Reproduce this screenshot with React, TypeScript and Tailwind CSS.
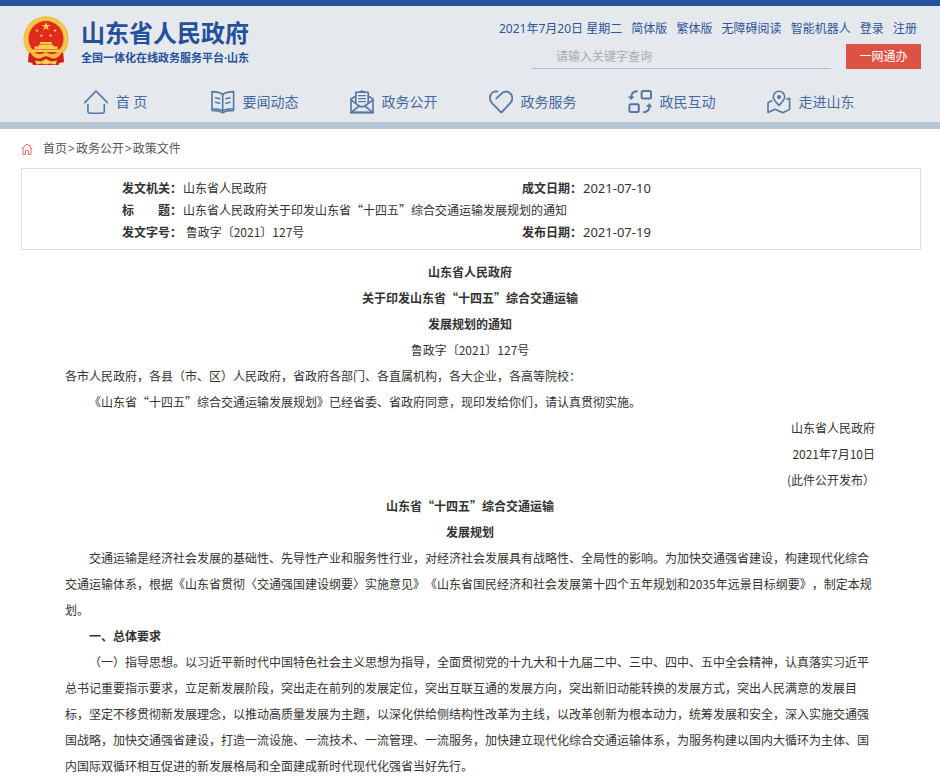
import React from 'react';

interface NavItem {
  label: string;
  icon: React.ReactNode;
}

interface Paragraph {
  text: string;
  kind: 'title' | 'center' | 'plain' | 'indent' | 'heading' | 'right';
}

const Icon: React.FC<{ children: React.ReactNode; width?: number }> = ({ children, width = 1.6 }) => (
  <svg
    viewBox="0 0 24 24"
    className="w-6 h-6 shrink-0 text-[#5577a3]"
    fill="none"
    stroke="currentColor"
    strokeWidth={width}
    strokeLinecap="round"
    strokeLinejoin="round"
    aria-hidden="true"
  >
    {children}
  </svg>
);

const navItems: NavItem[] = [
  {
    label: '首 页',
    icon: (
      <Icon>
        <path d="M.8 12.6 12 1l11.4 11.6" />
        <path d="M3.9 14.6v6.2q0 2.4 2.2 2.4h12q2.2 0 2.2-2.4v-6.2" />
      </Icon>
    ),
  },
  {
    label: '要闻动态',
    icon: (
      <Icon>
        <path d="M11.7 4.4C9 2.2 5 1.6 1 1.6v17.2c4 0 8 .4 10.7 2 2.7-1.6 6.7-2 10.9-2V1.6c-4.1 0-8.1.6-10.9 2.8z" />
        <path d="M11.7 4.4v16.4M1 18.8v1.6c4 0 8 .6 10.7 2.4 2.7-1.8 6.7-2.4 10.9-2.4v-1.6" />
        <path d="M4.6 7.8l4 1M4.6 12.2l4 1M15 8.8l4-1M15 13.2l4-1" />
      </Icon>
    ),
  },
  {
    label: '政务公开',
    icon: (
      <Icon>
        <path d="M5.8 13V2.2h12.4V13" />
        <path d="M9.5 2.2 12 1l2.500 1.2" />
        <path d="M5.8 6 1 9v13.500h22V9l-4.800-3" />
        <path d="M1 9.800l8.200 6.200q2.800 1.600 5.600 0L23 9.800" />
        <path d="M1.400 22.200l7.800-6.200M22.600 22.200 14.800 16" />
        <path d="M8.500 5.600h7M8.500 8.600h7M8.500 11.600h7" strokeWidth="1.2" />
        <path d="M1 22.500h22" strokeWidth="2.2" />
      </Icon>
    ),
  },
  {
    label: '政务服务',
    icon: (
      <Icon width={1.8}>
        <path d="M7.400 8.400l4.800-4.600c2.200-2.200 6-3.200 8.600-.8 3.200 2.800 3.400 7 .6 9.900L12.300 22.600 3 13.100C.2 10.200.2 5.200 3.300 2.600c1.500-1.200 3.300-1.500 5-1.200" />
      </Icon>
    ),
  },
  {
    label: '政民互动',
    icon: (
      <Icon width={2}>
        <rect x="13.6" y="1" width="9.400" height="7.400" rx="1.500" />
        <rect x="1.400" y="14.200" width="9.400" height="7.800" rx="1.500" />
        <path d="M9 1.200C5.400 1.400 3.400 3.600 3.300 7" />
        <path d="M1 6.800h4.800L3.300 9.400z" fill="currentColor" strokeWidth=".8" />
        <path d="M16 22.200c3.600-.4 5.400-2.400 5.500-5.800" />
        <path d="M19 16.400h4.600L21.400 13.800z" fill="currentColor" strokeWidth=".8" />
      </Icon>
    ),
  },
  {
    label: '走进山东',
    icon: (
      <Icon>
        <path d="M12 15.400C9 12 6.300 9.700 6.300 6.900a5.700 5.700 0 0 1 11.400 0c0 2.800-2.700 5.100-5.700 8.500z" />
        <circle cx="12" cy="7" r="1.200" fill="currentColor" />
        <path d="M4.800 10.800 1 12.800v9.600l7-3.200 7.800 3.600 6.800-3.400V8.200l-2.600 1" />
      </Icon>
    ),
  },
];

const topLinks = ['简体版', '繁体版', '无障碍阅读', '智能机器人', '登录', '注册'];

const paragraphs: Paragraph[] = [
  { kind: 'title', text: '山东省人民政府' },
  { kind: 'title', text: '关于印发山东省“十四五”综合交通运输' },
  { kind: 'title', text: '发展规划的通知' },
  { kind: 'center', text: '鲁政字〔2021〕127号' },
  { kind: 'plain', text: '各市人民政府，各县（市、区）人民政府，省政府各部门、各直属机构，各大企业，各高等院校：' },
  { kind: 'indent', text: '《山东省“十四五”综合交通运输发展规划》已经省委、省政府同意，现印发给你们，请认真贯彻实施。' },
  { kind: 'right', text: '山东省人民政府' },
  { kind: 'right', text: '2021年7月10日' },
  { kind: 'right', text: '(此件公开发布）' },
  { kind: 'title', text: '山东省“十四五”综合交通运输' },
  { kind: 'title', text: '发展规划' },
  {
    kind: 'indent',
    text: '交通运输是经济社会发展的基础性、先导性产业和服务性行业，对经济社会发展具有战略性、全局性的影响。为加快交通强省建设，构建现代化综合交通运输体系，根据《山东省贯彻〈交通强国建设纲要〉实施意见》《山东省国民经济和社会发展第十四个五年规划和2035年远景目标纲要》，制定本规划。',
  },
  { kind: 'heading', text: '一、总体要求' },
  {
    kind: 'indent',
    text: '（一）指导思想。以习近平新时代中国特色社会主义思想为指导，全面贯彻党的十九大和十九届二中、三中、四中、五中全会精神，认真落实习近平总书记重要指示要求，立足新发展阶段，突出走在前列的发展定位，突出互联互通的发展方向，突出新旧动能转换的发展方式，突出人民满意的发展目标，坚定不移贯彻新发展理念，以推动高质量发展为主题，以深化供给侧结构性改革为主线，以改革创新为根本动力，统筹发展和安全，深入实施交通强国战略，加快交通强省建设，打造一流设施、一流技术、一流管理、一流服务，加快建立现代化综合交通运输体系，为服务构建以国内大循环为主体、国内国际双循环相互促进的新发展格局和全面建成新时代现代化强省当好先行。',
  },
];

const paragraphStyles: Record<Paragraph['kind'], string> = {
  title: 'text-center font-bold',
  center: 'text-center',
  plain: '',
  indent: 'indent-6',
  heading: 'indent-6 font-bold',
  right: 'text-right',
};

const star = 'M0-1 .24-.31.95-.31.38.12.59.81 0 .4-.59.81-.38.12-.95-.31-.24-.31z';

const Emblem: React.FC = () => (
  <svg viewBox="0 0 46 50" className="w-[46px] h-[50px] shrink-0" role="img" aria-label="国徽">
    <path d="M6 34h34l.5 12-4 .5-1 2.500H10l-1-2.500-3.500-.5z" fill="#cf1f1c" />
    <circle cx="23" cy="22.800" r="22.600" fill="#f3bd3c" />
    <circle cx="23" cy="22.800" r="20" fill="none" stroke="#f8d468" strokeWidth="1.500" strokeDasharray="2 1" />
    <circle cx="23" cy="22.600" r="17.500" fill="#e02a20" />
    <g fill="#f7cf4b">
      <path d={star} transform="translate(23 10.500) scale(4.500)" />
      <path d={star} transform="translate(14 14.500) scale(2)" />
      <path d={star} transform="translate(32 14.500) scale(2)" />
      <path d={star} transform="translate(18.500 19.500) scale(2)" />
      <path d={star} transform="translate(27.500 19.500) scale(2)" />
      <path d="M17.500 26h11l1 2.500h-13zM15.500 29h15v1.500h4V33h-23v-2.500h4z" />
      <path d="M9 33.500h28v2.500H9z" />
    </g>
    <path d="M6 37c5-1 8 1 11 3l6-2 6 2c3-2 6-4 11-3l1 9-5 1-1 2H11l-1-2-5-1z" fill="#d4201c" />
    <path d="M9 35.500c4 3 8 4 14 .5 6 3.500 10 2.500 14-.5l1 2.500c-4 5-8 5.500-11 3.500l-4-1.500-4 1.500c-3 2-7 1.500-11-3.500z" fill="#f3bd3c" />
    <path d="M12 44.500l6 1 5-2.500 5 2.500 6-1-1.500 4-5.500-1-4 1-4-1-5.500 1z" fill="#f7cf4b" />
  </svg>
);

const Header: React.FC = () => (
  <header className="bg-[#e5e8ed] border-t-[6px] border-t-[#24539b] border-b-[7px] border-b-[#b6c4d2] text-[#2b5596]">
    <div className="flex justify-between pl-[23px] pr-[19px] pt-[10px]">
      <a href="#" className="flex gap-3 h-[54px]">
        <Emblem />
        <div className="pt-px font-bold text-[#24509a]">
          <h1 className="text-2xl leading-8">山东省人民政府</h1>
          <p className="text-[11px] leading-[18px] whitespace-nowrap">全国一体化在线政务服务平台·山东</p>
        </div>
      </a>
      <div className="w-[422px]">
        <div className="flex justify-between pr-1 pt-[5px] leading-4 whitespace-nowrap">
          <span>2021年7月20日 星期二</span>
          {topLinks.map((label) => (
            <a key={label} href="#">{label}</a>
          ))}
        </div>
        <form className="flex items-end justify-end gap-[15px] mt-[7px]" onSubmit={(e) => e.preventDefault()}>
          <input
            type="text"
            aria-label="搜索"
            placeholder="请输入关键字查询"
            className="w-[300px] h-[25px] px-[25px] border-b border-[#aebdd2] bg-transparent outline-none placeholder:text-[#a9acb0]"
          />
          <button type="button" className="w-[75px] h-[25px] bg-[#dc5345] text-white">一网通办</button>
        </form>
      </div>
    </div>
    <nav className="grid grid-cols-6 pl-[46px] pr-[60px] pt-[20px] pb-2 text-sm leading-6 text-[#456a9f]">
      {navItems.map((item) => (
        <a key={item.label} href="#" className="flex justify-center items-center gap-2 whitespace-nowrap">
          {item.icon}
          <span>{item.label}</span>
        </a>
      ))}
    </nav>
  </header>
);

const Breadcrumb: React.FC = () => (
  <div className="flex items-center gap-[10px] h-[39px] px-[21px] text-[#555]">
    <svg viewBox="0 0 12 12" className="w-3 h-3" fill="none" stroke="#d9706c" strokeLinejoin="round" aria-hidden="true">
      <path d="M.5 6 6 1l5.500 5M2 5v6.500h2.500V7.500h3v4H10V5M9 3.500V1.500" />
    </svg>
    <div className="flex gap-px">
      <a href="#">首页</a>
      <span>&gt;</span>
      <a href="#">政务公开</a>
      <span>&gt;</span>
      <a href="#">政策文件</a>
    </div>
  </div>
);

const DocumentInfo: React.FC = () => (
  <div className="ml-[21px] mr-[19px] pl-[100px] pt-2 pb-[6px] border border-[#ddd]">
    <table className="w-full table-fixed text-left leading-[22px] font-['Noto_Sans_CJK_SC',sans-serif]">
      <colgroup>
        <col className="w-[61px]" />
        <col className="w-[339px]" />
        <col className="w-[61px]" />
        <col />
      </colgroup>
      <tbody>
        <tr>
          <th scope="row">发文机关：</th>
          <td>山东省人民政府</td>
          <th scope="row">成文日期：</th>
          <td className="text-[13px] font-['Noto_Sans',sans-serif]">2021-07-10</td>
        </tr>
        <tr>
          <th scope="row">标　　题：</th>
          <td colSpan={3}>山东省人民政府关于印发山东省“十四五”综合交通运输发展规划的通知</td>
        </tr>
        <tr>
          <th scope="row">发文字号：</th>
          <td className="whitespace-pre"> 鲁政字〔2021〕127号</td>
          <th scope="row">发布日期：</th>
          <td className="text-[13px] font-['Noto_Sans',sans-serif]">2021-07-19</td>
        </tr>
      </tbody>
    </table>
  </div>
);

const App: React.FC = () => {
  return (
    <div lang="zh-CN" className="min-h-screen bg-white text-xs text-[#333] font-['Noto_Sans','Noto_Sans_CJK_SC',sans-serif] [text-spacing-trim:space-all]">
      <Header />
      <main>
        <Breadcrumb />
        <DocumentInfo />
        <article className="px-[65px] pt-[9px] leading-[26px] font-['Noto_Sans_CJK_SC',sans-serif]">
          {paragraphs.map((p, i) => (
            <p key={i} className={paragraphStyles[p.kind]}>{p.text}</p>
          ))}
        </article>
      </main>
    </div>
  );
};

export default App;
